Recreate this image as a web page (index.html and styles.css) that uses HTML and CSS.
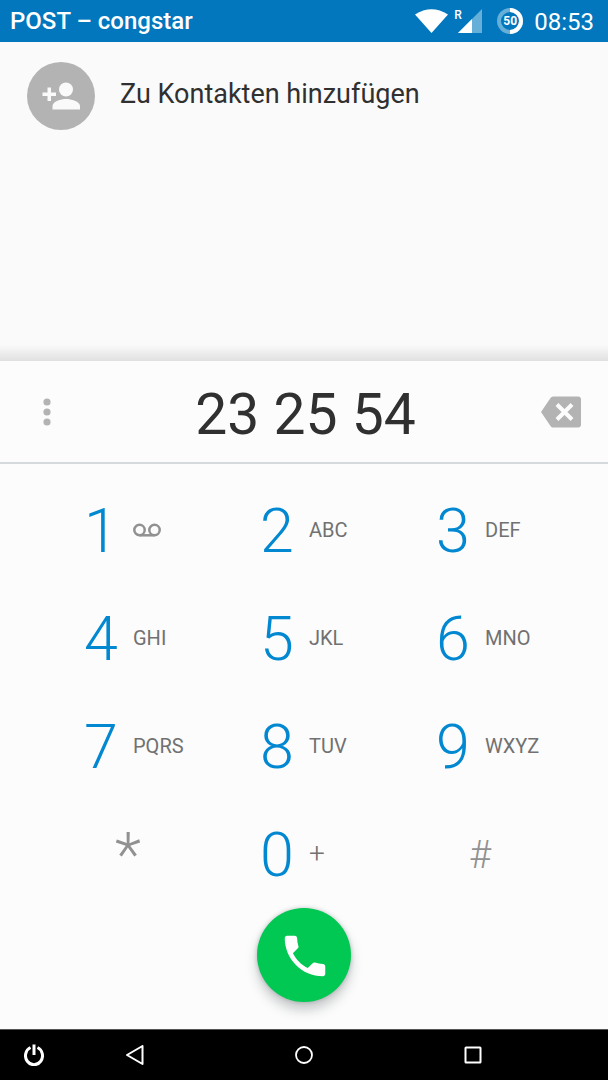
FILE: index.html
```html
<!DOCTYPE html>
<html lang="de">
<head>
<meta charset="utf-8">
<meta name="viewport" content="width=device-width, initial-scale=1">
<title>Telefon</title>
<link rel="stylesheet" href="styles.css">
</head>
<body>
<div class="phone">
  <header class="status">
    <span class="carrier">POST – congstar</span>
    <div class="indicators">
      <svg width="33" height="24" viewBox="0 0 33 24" role="img" aria-label="WLAN"><path d="M0 5.500Q16.500 -5 33 5.500L16.500 24Z" fill="#fff"/></svg>
      <div class="signal">
        <span class="roaming">R</span>
        <svg width="24" height="24" viewBox="0 0 24 24" role="img" aria-label="Mobilfunk"><path d="M24 0V24H0Z" fill="#66afd8"/><path d="M14 10V24H0Z" fill="#fff"/></svg>
      </div>
      <div class="battery">
        <svg width="26" height="26" viewBox="0 0 26 26" aria-hidden="true"><circle cx="13" cy="13" r="11" fill="none" stroke="#66afd8" stroke-width="4"/><path d="M13 2A11 11 0 0 1 13 24" fill="none" stroke="#fff" stroke-width="4"/></svg>
        <span class="percent">50</span>
      </div>
      <time class="clock">08:53</time>
    </div>
  </header>

  <main class="main">
    <section class="results">
      <button class="contact" type="button">
        <span class="avatar">
          <svg width="38" height="28" viewBox="0 0 38 28" aria-hidden="true" fill="#fafafa"><path d="M5.500 5.500H9V10.500H14V14H9V19H5.500V14H0.500V10.500H5.500Z"/><circle cx="24" cy="7.500" r="7"/><path d="M10.500 27.500V24C10.500 19.500 19 17 24 17S38 19.500 38 24V27.500Z"/></svg>
        </span>
        <span class="contact-label">Zu Kontakten hinzufügen</span>
      </button>
    </section>

    <section class="entry">
      <button class="icon-button" type="button" aria-label="Weitere Optionen">
        <svg width="8" height="28" viewBox="0 0 8 28" fill="#b3b3b3"><circle cx="4" cy="4" r="3.600"/><circle cx="4" cy="14" r="3.600"/><circle cx="4" cy="24" r="3.600"/></svg>
      </button>
      <output class="number">23 25 54</output>
      <button class="icon-button" type="button" aria-label="Löschen">
        <svg width="40" height="32" viewBox="0 0 40 32"><path d="M12 0.500H37Q40 0.500 40 3.500V28.500Q40 31.500 37 31.500H12Q10.500 31.500 9.500 30L0 16L9.500 2Q10.500 0.500 12 0.500Z" fill="#b3b3b3"/><path d="M16 8.500L31 23.500M31 8.500L16 23.500" stroke="#fcfcfc" stroke-width="4"/></svg>
      </button>
    </section>

    <section class="keypad">
      <button class="key" type="button"><span class="digit">1</span><span class="letters"><svg width="28" height="14" viewBox="0 0 28 14" role="img" aria-label="Mailbox" fill="none" stroke="#919191" stroke-width="2.500"><circle cx="6.500" cy="7" r="5.200"/><circle cx="21.500" cy="7" r="5.200"/><path d="M6.500 12.300H21.500"/></svg></span></button>
      <button class="key" type="button"><span class="digit">2</span><span class="letters">ABC</span></button>
      <button class="key" type="button"><span class="digit">3</span><span class="letters">DEF</span></button>
      <button class="key" type="button"><span class="digit">4</span><span class="letters">GHI</span></button>
      <button class="key" type="button"><span class="digit">5</span><span class="letters">JKL</span></button>
      <button class="key" type="button"><span class="digit">6</span><span class="letters">MNO</span></button>
      <button class="key" type="button"><span class="digit">7</span><span class="letters">PQRS</span></button>
      <button class="key" type="button"><span class="digit">8</span><span class="letters">TUV</span></button>
      <button class="key" type="button"><span class="digit">9</span><span class="letters">WXYZ</span></button>
      <button class="key symbol star" type="button">*</button>
      <button class="key" type="button"><span class="digit">0</span><span class="letters plus">+</span></button>
      <button class="key symbol" type="button">#</button>
    </section>

    <div class="call-row">
      <button class="call" type="button" aria-label="Anrufen">
        <svg width="54" height="54" viewBox="0 0 24 24" fill="#fff"><path d="M6.620 10.790c1.440 2.830 3.760 5.140 6.590 6.590l2.200-2.200c.27-.27.67-.36 1.020-.24 1.120.37 2.330.57 3.570.57.550 0 1 .45 1 1V20c0 .55-.45 1-1 1-9.390 0-17-7.610-17-17 0-.55.45-1 1-1h3.500c.55 0 1 .45 1 1 0 1.250.2 2.450.57 3.570.11.350.03.740-.25 1.020l-2.200 2.200z"/></svg>
      </button>
    </div>
  </main>

  <nav class="navbar">
    <button type="button" aria-label="Ein/Aus"><svg width="20" height="22" viewBox="0 0 20 22" fill="none" stroke="#fff" stroke-width="3"><path d="M6.500 3.500A8.500 9 0 1 0 13.500 3.500"/><path d="M10 0.500V11"/></svg></button>
    <button type="button" aria-label="Zurück"><svg width="18" height="20" viewBox="0 0 18 20" fill="none" stroke="#fff" stroke-width="2" stroke-linejoin="round"><path d="M16.500 1V19L1 10Z"/></svg></button>
    <button type="button" aria-label="Startseite"><svg width="18" height="18" viewBox="0 0 18 18" fill="none" stroke="#fff" stroke-width="1.800"><circle cx="9" cy="9" r="8"/></svg></button>
    <button type="button" aria-label="Übersicht"><svg width="18" height="18" viewBox="0 0 18 18" fill="none" stroke="#fff" stroke-width="2"><rect x="1.500" y="1.500" width="15" height="15" rx="0.500"/></svg></button>
  </nav>
</div>
</body>
</html>
```
FILE: styles.css
```css
* {
  box-sizing: border-box;
}

body {
  margin: 0;
  font-family: Roboto, "Noto Sans", sans-serif;
  color: #303030;
  background: #fcfcfc;
}

button {
  margin: 0;
  padding: 0;
  border: 0;
  background: none;
  color: inherit;
  font: inherit;
  cursor: pointer;
}

svg {
  display: block;
}

.phone {
  display: flex;
  flex-direction: column;
  min-height: 100vh;
}

.status {
  display: flex;
  align-items: center;
  justify-content: space-between;
  height: 42px;
  padding: 0 14px 0 10px;
  background: #0277bd;
  color: #fff;
}

.carrier {
  font-size: 24px;
  font-weight: 500;
}

.indicators {
  display: flex;
  align-items: center;
}

.signal {
  display: flex;
  align-items: flex-start;
  margin: 0 15px 0 6px;
}

.roaming {
  width: 4px;
  font-size: 12px;
  font-weight: 500;
  line-height: 12px;
}

.battery {
  display: grid;
  place-items: center;
  margin-right: 11px;
}

.battery > * {
  grid-area: 1 / 1;
}

.percent {
  font-size: 12px;
  font-weight: 700;
}

.clock {
  padding-top: 2px;
  font-size: 24px;
  line-height: 28px;
}

.main {
  display: flex;
  flex: 1;
  flex-direction: column;
}

.results {
  flex: 1;
  padding: 20px 27px;
  background: linear-gradient(#e0e0e000, #e0e0e0) bottom / 100% 16px no-repeat #fafafa;
}

.contact {
  display: flex;
  align-items: center;
  gap: 25px;
  font-size: 27px;
  line-height: 32px;
  text-align: left;
}

.contact-label {
  padding-bottom: 4px;
}

.avatar {
  display: grid;
  place-items: center;
  width: 68px;
  height: 68px;
  border-radius: 50%;
  background: #b3b3b3;
}

.entry {
  display: flex;
  align-items: center;
  justify-content: space-between;
  height: 103px;
  padding: 0 27px;
  border-bottom: 2px solid #d5d9db;
}

.icon-button {
  display: grid;
  place-items: center;
  width: 40px;
  height: 48px;
}

.number {
  padding: 6px 0 0 3px;
  font-size: 57px;
  line-height: 68px;
}

.keypad {
  display: grid;
  grid-template-columns: repeat(3, 1fr);
  grid-auto-rows: 108px;
  padding: 12px 40px 0;
}

.key {
  display: flex;
  align-items: center;
  padding-left: 44px;
}

.digit {
  width: 49px;
  padding-top: 2px;
  color: #0288d1;
  font-size: 61px;
  font-weight: 300;
  line-height: 72px;
  text-align: left;
}

.letters {
  color: #717171;
  font-size: 20px;
  line-height: 24px;
}

.plus {
  font-size: 28px;
  font-weight: 300;
}

.symbol {
  justify-content: center;
  padding: 2px 0 0;
  color: #919191;
  font-size: 38px;
  font-weight: 300;
}

.star {
  font-size: 61px;
}

.call-row {
  display: flex;
  justify-content: center;
  padding-bottom: 27px;
}

.call {
  display: grid;
  place-items: center;
  width: 94px;
  height: 94px;
  padding: 1px 0 0 1px;
  border-radius: 50%;
  background: #00c853;
  box-shadow: 0 8px 12px #26323840, 0 0 4px #26323840;
}

.navbar {
  display: grid;
  grid-template-columns: 4fr 8fr 12fr 8fr 4fr;
  height: 51px;
  background: #000;
  border-top: 1px solid #555;
}

.navbar button {
  display: grid;
  place-items: center;
}
```
